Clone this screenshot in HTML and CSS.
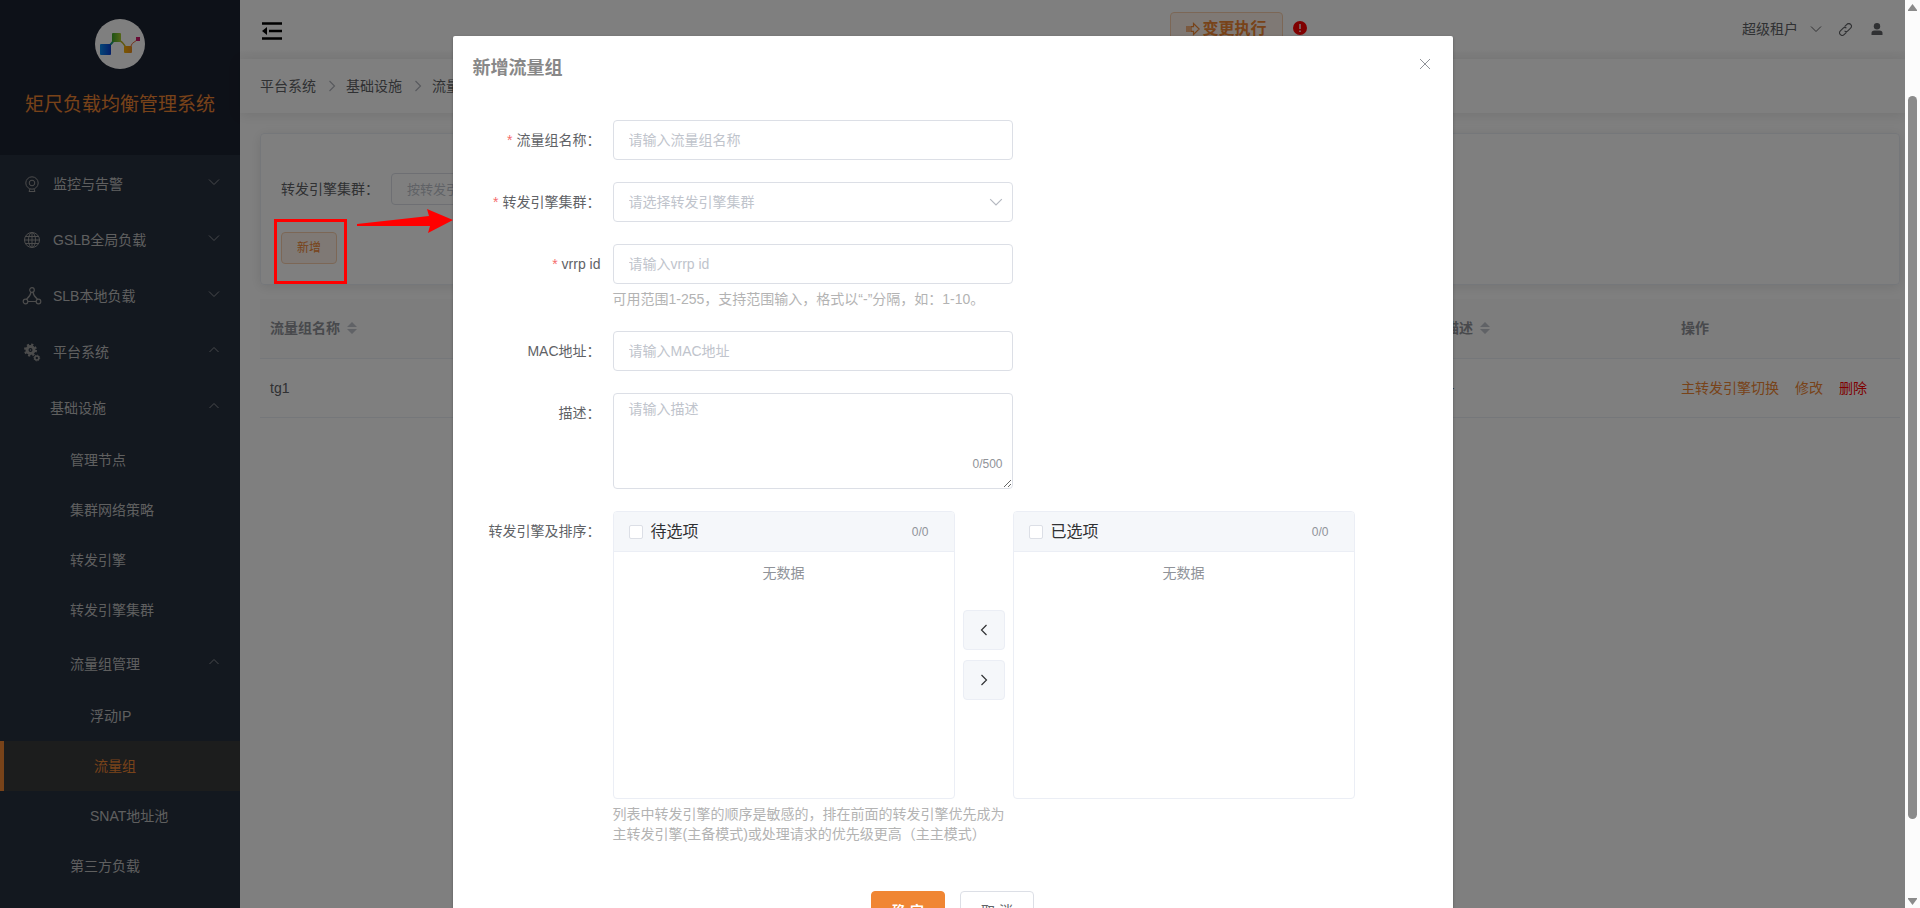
FILE: index.html
```html
<!DOCTYPE html>
<html lang="zh-CN">
<head>
  <meta charset="UTF-8">
  <title>矩尺负载均衡管理系统</title>
  <link rel="stylesheet" href="styles.css">
</head>
<body>

<!-- shared icons -->
<svg class="sprite" aria-hidden="true">
  <symbol id="i-down" viewBox="0 0 12 12"><path d="M1 3.500l5 5 5-5" fill="none" stroke="currentColor"/></symbol>
  <symbol id="i-up" viewBox="0 0 12 12"><path d="M1.500 8L6 3.500 10.500 8" fill="none" stroke="currentColor"/></symbol>
  <symbol id="i-right" viewBox="0 0 12 12"><path d="M3.500 1l5 5-5 5" fill="none" stroke="currentColor" stroke-width="1.200"/></symbol>
  <symbol id="i-left" viewBox="0 0 12 12"><path d="M8.500 1l-5 5 5 5" fill="none" stroke="currentColor" stroke-width="1.200"/></symbol>
  <symbol id="i-sort" viewBox="0 0 10 14"><path d="M5 1l5 5H0zM5 13l5-5H0z" fill="currentColor"/></symbol>
</svg>

<div class="screen">
  <div class="viewport">

    <div class="app">
      <aside class="sidebar">
        <div class="brand">
          <svg class="brand-logo" viewBox="0 0 50 50">
            <defs>
              <linearGradient id="g1"><stop offset="0" stop-color="#0a8cf0"/><stop offset="1" stop-color="#0a3fd0"/></linearGradient>
              <linearGradient id="g2"><stop offset="0" stop-color="#3aa52a"/><stop offset="1" stop-color="#a8cc30"/></linearGradient>
              <linearGradient id="g3"><stop offset="0" stop-color="#f5b000"/><stop offset="1" stop-color="#e98a20"/></linearGradient>
            </defs>
            <circle cx="25" cy="25" r="25" fill="#fff"/>
            <path d="M13 27q3-1 6-6" fill="none" stroke="#1a9a70" stroke-width="2"/>
            <path d="M25 22q3 1 6 7" fill="none" stroke="#c0b020" stroke-width="1.500"/>
            <path d="M35 29q1-5 7-8" fill="none" stroke="#e86a3a" stroke-width="1"/>
            <rect x="5" y="25" width="11" height="11" rx="1" fill="url(#g1)"/>
            <rect x="17" y="14" width="9" height="9" rx="1" fill="url(#g2)"/>
            <rect x="29" y="27" width="8" height="7" rx="1" fill="url(#g3)"/>
            <rect x="41" y="18" width="4" height="4" fill="#d0186a"/>
          </svg>
          <h1 class="brand-name">矩尺负载均衡管理系统</h1>
        </div>
        <nav class="menu">
          <a class="menu-item" href="#">
            <svg class="menu-icon" viewBox="0 0 16 16" fill="none" stroke="currentColor"><circle cx="8" cy="7" r="6.200"/><circle cx="8" cy="7" r="2.800"/><path d="M6 13l-1 2.500h6L10 13"/></svg>
            <span>监控与告警</span><svg class="menu-arrow"><use href="#i-down"/></svg>
          </a>
          <a class="menu-item" href="#">
            <svg class="menu-icon" viewBox="0 0 16 16" fill="none" stroke="currentColor"><circle cx="8" cy="8" r="7.500"/><ellipse cx="8" cy="8" rx="3.500" ry="7.500"/><path d="M8 .5v15M1.500 4.500h13M.5 8h15M1.500 11.500h13"/></svg>
            <span>GSLB全局负载</span><svg class="menu-arrow"><use href="#i-down"/></svg>
          </a>
          <a class="menu-item" href="#">
            <svg class="menu-icon" viewBox="0 0 16 16" fill="none" stroke="currentColor" stroke-width="1.200"><circle cx="8" cy="2" r="2.300"/><circle cx="1.500" cy="13.500" r="2.300"/><circle cx="14.500" cy="13.500" r="2.300"/><path d="M7 4.200Q6.500 8 2.500 11.300M9 4.200q.5 3.800 4.500 7.100M4 13.500h8"/></svg>
            <span>SLB本地负载</span><svg class="menu-arrow"><use href="#i-down"/></svg>
          </a>
          <a class="menu-item" href="#">
            <svg class="menu-icon" viewBox="0 0 16 16" fill="none" stroke="currentColor"><circle cx="6.500" cy="6" r="3.500" stroke-width="3"/><circle cx="6.500" cy="6" r="5.500" stroke-width="2" stroke-dasharray="2.200 2.120"/><circle cx="6.500" cy="6" r=".8" fill="currentColor" stroke="none"/><circle cx="12.800" cy="14" r="2" stroke-width="1.600"/><circle cx="12.800" cy="14" r="2.900" stroke-dasharray="1.200 1.070"/></svg>
            <span>平台系统</span><svg class="menu-arrow"><use href="#i-up"/></svg>
          </a>
          <a class="menu-item level-2" href="#"><span>基础设施</span><svg class="menu-arrow"><use href="#i-up"/></svg></a>
          <a class="menu-item leaf level-3" href="#">管理节点</a>
          <a class="menu-item leaf level-3" href="#">集群网络策略</a>
          <a class="menu-item leaf level-3" href="#">转发引擎</a>
          <a class="menu-item leaf level-3" href="#">转发引擎集群</a>
          <a class="menu-item level-3" href="#"><span>流量组管理</span><svg class="menu-arrow"><use href="#i-up"/></svg></a>
          <a class="menu-item leaf level-4" href="#">浮动IP</a>
          <a class="menu-item leaf level-4 active" href="#">流量组</a>
          <a class="menu-item leaf level-4" href="#">SNAT地址池</a>
          <a class="menu-item leaf level-3" href="#">第三方负载</a>
        </nav>
      </aside>

      <main class="main">
        <header class="topbar">
          <svg class="fold-icon" viewBox="0 0 20 18"><path d="M0 1.500h20M7 9h13M0 16.500h20" stroke="#000" stroke-width="2.600"/><path d="M0 9l5-4v8z"/></svg>
          <div class="change">
            <button class="btn btn-change" type="button">
              <svg viewBox="0 0 14 14" width="14" height="14" fill="none" stroke="currentColor" stroke-width="1.200"><path d="M5 4.600h2.500V1.500L13.200 7l-5.700 5.500V9.400H5zM1 4v6M3 4v6" /></svg>变更执行
            </button>
            <svg class="alert-icon" viewBox="0 0 14 14"><circle cx="7" cy="7" r="7" fill="#f00"/><path d="M7 3v5M7 9.500V11" stroke="#fff" stroke-width="1.400"/></svg>
          </div>
          <div class="account">
            <span>超级租户</span>
            <svg class="ic-12"><use href="#i-down"/></svg>
            <svg class="ic-link" viewBox="0 0 14 14" fill="none" stroke="currentColor" stroke-width="1.200"><path d="M6 4l2.500-2.500a2.500 2.500 0 0 1 4 4L9.500 8.500a2.500 2.500 0 0 1-3.500 0M8 10l-2.500 2.500a2.500 2.500 0 0 1-4-4L4.500 5.500a2.500 2.500 0 0 1 3.500 0"/></svg>
            <svg class="ic-12" viewBox="0 0 12 12" fill="currentColor"><circle cx="6" cy="3.200" r="3.200"/><path d="M.5 12V10q0-2.500 3-2.500h5q3 0 3 2.500v2z"/></svg>
          </div>
        </header>

        <nav class="breadcrumb">
          <a href="#">平台系统</a><svg class="ic-12"><use href="#i-right"/></svg>
          <a href="#">基础设施</a><svg class="ic-12"><use href="#i-right"/></svg>
          <a href="#">流量组管理</a>
        </nav>

        <div class="content">
          <section class="search-card">
            <div class="search-row">
              <label for="q-cluster">转发引擎集群：</label>
              <input class="search-input" id="q-cluster" type="text" placeholder="按转发引擎集群查询">
            </div>
            <button class="btn btn-add" type="button">新增</button>
          </section>

          <table class="data-table">
            <colgroup><col><col class="col-desc"><col class="col-ops"></colgroup>
            <thead>
              <tr>
                <th>流量组名称<svg class="sort"><use href="#i-sort"/></svg></th>
                <th>描述<svg class="sort"><use href="#i-sort"/></svg></th>
                <th>操作</th>
              </tr>
            </thead>
            <tbody>
              <tr>
                <td>tg1</td>
                <td>--</td>
                <td><div class="ops"><a href="#">主转发引擎切换</a><a href="#">修改</a><a class="danger" href="#">删除</a></div></td>
              </tr>
            </tbody>
          </table>
        </div>
      </main>
    </div>

    <div class="overlay">
      <div class="dialog" role="dialog" aria-labelledby="dlg-title">
        <div class="dialog-header">
          <h2 class="dialog-title" id="dlg-title">新增流量组</h2>
          <button class="dialog-close" type="button" aria-label="关闭">
            <svg viewBox="0 0 12 12" width="12" height="12"><path d="M1 1l10 10M11 1L1 11" stroke="currentColor"/></svg>
          </button>
        </div>
        <form class="dialog-body">
          <div class="form-item">
            <label class="form-label required" for="f-name">流量组名称：</label>
            <div class="field"><input class="input" id="f-name" type="text" placeholder="请输入流量组名称"></div>
          </div>
          <div class="form-item">
            <label class="form-label required" for="f-cluster">转发引擎集群：</label>
            <div class="field">
              <select class="input" id="f-cluster"><option>请选择转发引擎集群</option></select>
              <svg class="select-arrow"><use href="#i-down"/></svg>
            </div>
          </div>
          <div class="form-item">
            <label class="form-label required" for="f-vrrp">vrrp id</label>
            <div class="field">
              <input class="input" id="f-vrrp" type="text" placeholder="请输入vrrp id">
              <p class="hint">可用范围1-255，支持范围输入，格式以“-”分隔，如：1-10。</p>
            </div>
          </div>
          <div class="form-item">
            <label class="form-label" for="f-mac">MAC地址：</label>
            <div class="field"><input class="input" id="f-mac" type="text" placeholder="请输入MAC地址"></div>
          </div>
          <div class="form-item">
            <label class="form-label" for="f-desc">描述：</label>
            <div class="field">
              <textarea class="input textarea" id="f-desc" placeholder="请输入描述"></textarea>
              <span class="count">0/500</span>
            </div>
          </div>
          <div class="form-item">
            <span class="form-label">转发引擎及排序：</span>
            <div>
              <div class="transfer">
                <div class="panel">
                  <div class="panel-header">
                    <input class="check" id="t-left" type="checkbox"><label for="t-left">待选项</label><span class="panel-count">0/0</span>
                  </div>
                  <p class="panel-empty">无数据</p>
                </div>
                <div class="transfer-buttons">
                  <button class="btn-move" type="button" aria-label="左移"><svg class="ic-12"><use href="#i-left"/></svg></button>
                  <button class="btn-move" type="button" aria-label="右移"><svg class="ic-12"><use href="#i-right"/></svg></button>
                </div>
                <div class="panel">
                  <div class="panel-header">
                    <input class="check" id="t-right" type="checkbox"><label for="t-right">已选项</label><span class="panel-count">0/0</span>
                  </div>
                  <p class="panel-empty">无数据</p>
                </div>
              </div>
              <p class="hint">列表中转发引擎的顺序是敏感的，排在前面的转发引擎优先成为主转发引擎(主备模式)或处理请求的优先级更高（主主模式）</p>
            </div>
          </div>
          <div class="dialog-footer">
            <button class="btn btn-primary" type="button">确 定</button>
            <button class="btn btn-plain" type="button">取 消</button>
          </div>
        </form>
      </div>
    </div>

    <!-- annotation -->
    <div class="mark-box"></div>
    <svg class="mark-arrow" viewBox="0 0 96 26"><path d="M0 15L72 7 70 0 96 11 71 24 73 17 0 17z" fill="#f00"/></svg>
  </div>

  <div class="scrollbar">
    <svg viewBox="0 0 9 7" width="9" height="7"><path d="M4.500 0L9 6v1H0V6z" fill="#8b8b8b"/></svg>
    <div class="track"><div class="thumb"></div></div>
    <svg viewBox="0 0 9 7" width="9" height="7"><path d="M4.500 7L9 1V0H0v1z" fill="#8b8b8b"/></svg>
  </div>
</div>

</body>
</html>
```
FILE: styles.css
```css
* {
  box-sizing: border-box;
}
body {
  margin: 0;
  font-family: "Liberation Sans", "Noto Sans CJK SC", sans-serif;
  font-size: 14px;
  line-height: 20px;
  color: #606266;
}
h1, h2, p {
  margin: 0;
}
a {
  color: inherit;
  text-decoration: none;
}
button, input, select, textarea {
  font: inherit;
}
.sprite {
  display: none;
}
.screen {
  display: flex;
  height: 100vh;
  overflow: hidden;
}
.viewport {
  position: relative;
  flex: 1;
  overflow: hidden;
}
.app {
  display: flex;
  height: 100%;
}
.ic-12 {
  width: 12px;
  height: 12px;
}

/* sidebar */
.sidebar {
  width: 240px;
  flex: none;
  background-color: #26303e;
  color: #bfbfbf;
}
.brand {
  height: 155px;
  padding-top: 19px;
  background-color: #1b2230;
  text-align: center;
}
.brand-logo {
  display: block;
  width: 50px;
  height: 50px;
  margin: 0 auto 26px;
}
.brand-name {
  font-size: 19px;
  line-height: 20px;
  font-weight: normal;
  color: #f08633;
}
.menu-item {
  display: flex;
  align-items: center;
  height: 56px;
  padding: 1px 20px 0 24px;
}
.menu-icon {
  width: 16px;
  height: 16px;
  margin-right: 13px;
  overflow: visible;
  color: #999;
}
.menu-arrow {
  width: 12px;
  height: 12px;
  margin: 0 0 4px auto;
  color: #909399;
}
.leaf {
  height: 50px;
  padding-top: 0;
}
.level-2 {
  padding-left: 50px;
}
.level-3 {
  padding-left: 70px;
}
.level-4 {
  padding-left: 90px;
}
.active {
  border-left: 4px solid #f08633;
  background-color: #383a3b;
  color: #f08633;
}

/* main */
.main {
  flex: 1;
  background-color: #fff;
}
.topbar {
  display: flex;
  justify-content: space-between;
  height: 59px;
  padding: 12px 22px 0;
  background: linear-gradient(#fff 50px, #fafafa 53px);
}
.fold-icon {
  width: 20px;
  height: 18px;
  margin-top: 10px;
}
.change {
  display: flex;
  gap: 10px;
  margin-left: 453px;
}
.btn {
  border: 1px solid #dcdfe6;
  border-radius: 4px;
  background-color: #fff;
  color: #606266;
}
.btn-change {
  display: flex;
  align-items: center;
  height: 34px;
  padding: 0 15px;
  gap: 2px;
  border-color: #f9cfad;
  background-color: #fef3eb;
  font-size: 16px;
  font-weight: bold;
  color: #f08633;
}
.alert-icon {
  width: 14px;
  height: 14px;
  margin-top: 9px;
}
.account {
  display: flex;
  align-items: center;
  height: 34px;
}
.account svg {
  margin-left: 12px;
}
.account .ic-link {
  width: 13px;
  height: 13px;
  margin: 0 7px 0 17px;
}
.breadcrumb {
  display: flex;
  align-items: center;
  height: 54px;
  padding: 0 20px;
  gap: 8px;
  box-shadow: 0 2px 12px rgba(0, 0, 0, 0.1);
}
.breadcrumb svg {
  margin-left: 2px;
  color: #b0b4bc;
}
.content {
  padding: 20px 5px 20px 20px;
}
.search-card {
  height: 152px;
  padding: 39px 20px 0;
  border: 1px solid #ebeef5;
  border-radius: 4px;
  box-shadow: 0 2px 12px rgba(0, 0, 0, 0.1);
}
.search-row {
  display: flex;
  align-items: center;
  gap: 12px;
  margin-bottom: 27px;
}
.search-input {
  width: 200px;
  height: 32px;
  padding: 0 15px;
  border: 1px solid #dcdfe6;
  border-radius: 4px;
  font-size: 13px;
}
.btn-add {
  height: 32px;
  padding: 0 15px;
  border-color: #f9cfad;
  background-color: #fef3eb;
  font-size: 12px;
  color: #f08633;
}
.data-table {
  width: 100%;
  margin-top: 14px;
  border-collapse: collapse;
  table-layout: fixed;
}
.col-desc {
  width: 236px;
}
.col-ops {
  width: 229px;
}
.data-table th, .data-table td {
  height: 59px;
  padding: 0 10px;
  border-bottom: 1px solid #ebeef5;
  text-align: left;
}
.data-table th {
  background-color: #fafafa;
  color: #909399;
}
.sort {
  width: 10px;
  height: 14px;
  margin: -4px 0 0 7px;
  vertical-align: middle;
  color: #c0c4cc;
}
.ops {
  display: flex;
  gap: 16px;
  color: #f08633;
}
.danger {
  color: #f00;
}

/* dialog */
.overlay {
  position: absolute;
  inset: 0;
  padding-top: 36px;
  background-color: rgba(0, 0, 0, 0.5);
}
.dialog {
  width: 1000px;
  margin: 0 auto;
  border-radius: 2px;
  background-color: #fff;
  box-shadow: 0 1px 3px rgba(0, 0, 0, 0.3);
}
.dialog-header {
  display: flex;
  justify-content: space-between;
  padding: 20px 20px 10px;
}
.dialog-title {
  font-size: 18px;
  line-height: 24px;
  color: #888;
}
.dialog-close {
  display: flex;
  height: 16px;
  padding: 0 2px;
  border: 0;
  background: none;
  align-items: center;
  color: #909399;
}
.dialog-body {
  padding: 30px 20px;
}
.form-item {
  display: flex;
  margin-bottom: 22px;
}
.form-label {
  width: 140px;
  padding-right: 12px;
  line-height: 40px;
  text-align: right;
}
.required::before {
  content: "*";
  margin-right: 4px;
  color: #f56c6c;
}
.field {
  position: relative;
  width: 400px;
}
.input {
  display: block;
  width: 100%;
  height: 40px;
  padding: 0 15px;
  border: 1px solid #dcdfe6;
  border-radius: 4px;
  background-color: #fff;
  color: #c0c4cc;
  appearance: none;
}
.input::placeholder, .search-input::placeholder {
  color: #c0c4cc;
}
.textarea {
  height: 96px;
  padding: 5px 15px;
  resize: vertical;
}
.select-arrow {
  position: absolute;
  top: 13px;
  right: 10px;
  width: 14px;
  height: 14px;
  color: #b4b8c0;
}
.count {
  position: absolute;
  right: 10px;
  bottom: 15px;
  font-size: 12px;
  color: #909399;
}
.hint {
  max-width: 400px;
  padding-top: 5px;
  color: #b3b3b3;
}
.transfer {
  display: flex;
}
.panel {
  width: 342px;
  height: 288px;
  border: 1px solid #ebeef5;
  border-radius: 4px;
  overflow: hidden;
}
.panel-header {
  display: flex;
  align-items: center;
  height: 40px;
  padding: 0 25px 0 15px;
  border-bottom: 1px solid #ebeef5;
  background-color: #f5f7fa;
  font-size: 16px;
  color: #303133;
}
.check {
  width: 14px;
  height: 14px;
  margin: 0 8px 0 0;
  border: 1px solid #dcdfe6;
  border-radius: 2px;
  background-color: #fff;
  appearance: none;
}
.panel-count {
  margin-left: auto;
  font-size: 12px;
  color: #909399;
}
.panel-empty {
  padding-top: 11px;
  text-align: center;
  color: #909399;
}
.transfer-buttons {
  display: flex;
  flex-direction: column;
  justify-content: center;
  gap: 10px;
  padding: 0 8px;
}
.btn-move {
  display: flex;
  align-items: center;
  justify-content: center;
  width: 42px;
  height: 40px;
  padding: 0;
  border: 1px solid #ebeef5;
  border-radius: 4px;
  background-color: #f5f7fa;
  color: #303133;
}
.dialog-footer {
  display: flex;
  justify-content: center;
  gap: 15px;
  padding-top: 25px;
}
.dialog-footer .btn {
  height: 40px;
  padding: 0 20px;
}
.dialog-footer .btn-primary {
  border-color: #f08633;
  background-color: #f08633;
  font-weight: bold;
  color: #fff;
}

/* annotation over the page */
.mark-box {
  position: absolute;
  left: 274px;
  top: 219px;
  width: 73px;
  height: 65px;
  border: 3px solid #f00;
}
.mark-arrow {
  position: absolute;
  left: 357px;
  top: 209px;
  width: 96px;
  height: 26px;
}

/* page scrollbar */
.scrollbar {
  display: flex;
  flex-direction: column;
  align-items: center;
  width: 15px;
  padding: 4px 0 3px;
  background-color: #fcfcfc;
}
.track {
  flex: 1;
  width: 9px;
  padding: 85px 0 79px;
}
.thumb {
  height: 100%;
  border-radius: 5px;
  background-color: #8b8b8b;
}
```
